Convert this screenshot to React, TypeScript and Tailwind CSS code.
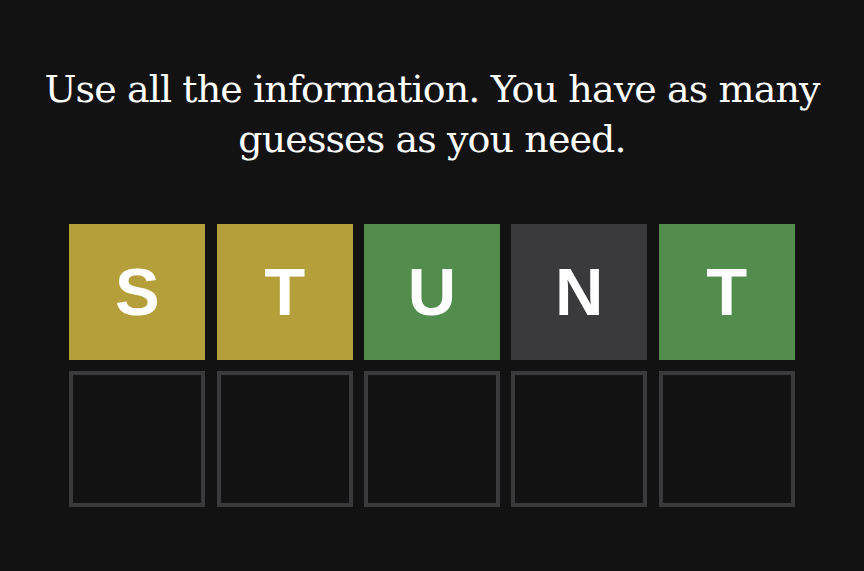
import React from 'react';

type Tile = { letter: string; state: 'present' | 'correct' | 'absent' };

const guess: Tile[] = [
  { letter: 'S', state: 'present' },
  { letter: 'T', state: 'present' },
  { letter: 'U', state: 'correct' },
  { letter: 'N', state: 'absent' },
  { letter: 'T', state: 'correct' },
];

const tileColors: Record<Tile['state'], string> = {
  present: 'bg-[#b59f3b]',
  correct: 'bg-[#538d4e]',
  absent: 'bg-[#3a3a3c]',
};

export default function App() {
  return (
    <div className="w-[864px] h-[571px] bg-[#121213] flex flex-col items-center overflow-hidden">
      <p
        className="mt-[64px] text-white text-center text-[38px] leading-[50px] tracking-[-0.9px] w-[820px]"
        style={{ fontFamily: '"DejaVu Serif", "Liberation Serif", serif' }}
      >
        Use all the information. You have as many guesses as you need.
      </p>

      <div className="mt-[60px] grid grid-cols-5 gap-x-[11.3px] gap-y-[11px]">
        {guess.map((t, i) => (
          <div
            key={i}
            className={`w-[136px] h-[136px] flex items-center justify-center text-white font-bold text-[67px] ${tileColors[t.state]}`}
            style={{ fontFamily: '"Liberation Sans", Arial, sans-serif' }}
          >
            {t.letter}
          </div>
        ))}
        {Array.from({ length: 5 }).map((_, i) => (
          <div key={`e${i}`} className="w-[136px] h-[136px] border-4 border-[#3a3a3c]" />
        ))}
      </div>
    </div>
  );
}
